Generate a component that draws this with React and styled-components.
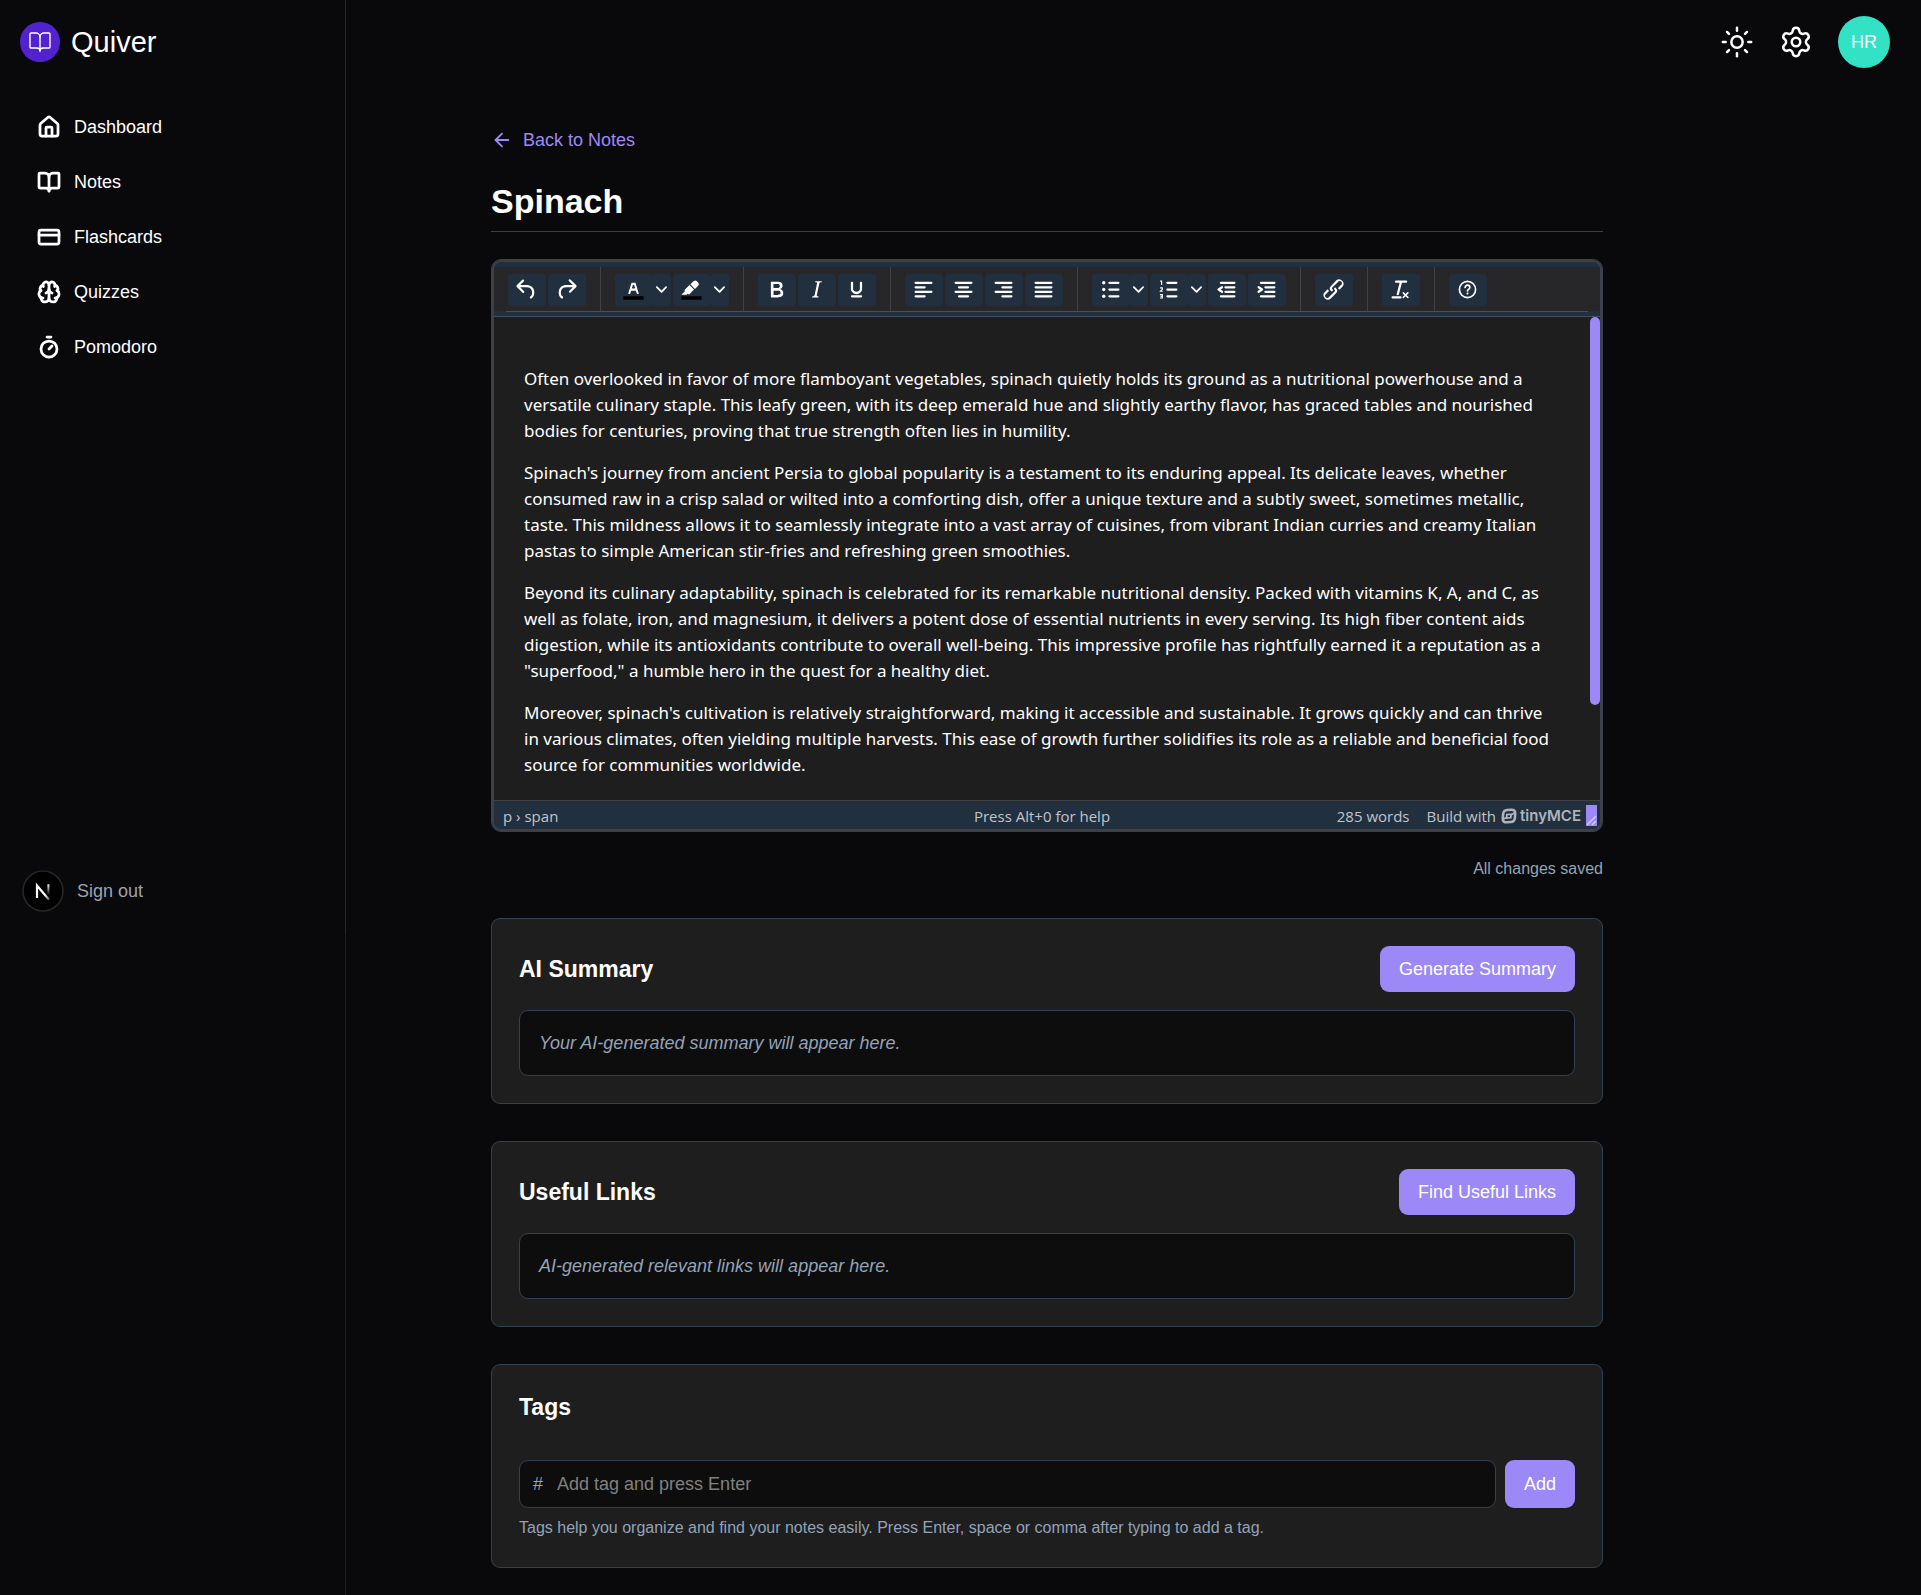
import React from "react";
import styled, { createGlobalStyle, css } from "styled-components";
import { House, BookOpen, CreditCard, Brain, Timer, Sun, Settings, ArrowLeft } from "lucide-react";

const c = {
  page: "#09090b",
  line: "#27272a",
  panel: "#1e1e1e",
  well: "#0d0d0d",
  border: "#334155",
  accent: "#9d88f7",
  blue: "#222f3e",
  muted: "#94a3b8",
  text: "#ffffff",
};

const GlobalStyle = createGlobalStyle`
  *, *::before, *::after { box-sizing: border-box; }
  body {
    margin: 0;
    background: ${c.page};
    color: ${c.text};
    font: 18px/26px "Liberation Sans", Arial, sans-serif;
  }
  h1, h2, p { margin: 0; }
  button, input { font: inherit; color: inherit; }
  button { border: 0; padding: 0; background: none; cursor: pointer; }
  a { color: inherit; text-decoration: none; }
  svg { display: block; flex: none; }
`;

const Shell = styled.div`
  display: flex;
  min-height: 100vh;
`;

const SidebarRail = styled.aside`
  flex: 0 0 346px;
  border-right: 1px solid #1c1c1f;
`;

const Sidebar = styled.div`
  display: flex;
  flex-direction: column;
  min-height: 934px;
  margin-right: -1px;
  padding: 22px 20px;
  border-right: 1px solid ${c.line};
`;

const Brand = styled.a`
  display: flex;
  align-items: center;
  gap: 11px;
  height: 40px;
  font-size: 29px;
`;

const BrandMark = styled.span`
  display: grid;
  place-items: center;
  width: 40px;
  height: 40px;
  border-radius: 50%;
  background: #5222d0;
`;

const Nav = styled.nav`
  display: flex;
  flex-direction: column;
  gap: 9px;
  margin-top: 42px;
`;

const NavLink = styled.a`
  display: flex;
  align-items: center;
  gap: 13px;
  height: 46px;
  padding: 0 17px;
`;

const SidebarFoot = styled.div`
  display: flex;
  align-items: center;
  gap: 13px;
  margin-top: auto;
  padding-left: 2px;
`;

const SignOut = styled.button`
  color: #9ca3af;
`;

const Content = styled.div`
  flex: 1;
  min-width: 0;
`;

const TopBar = styled.header`
  display: flex;
  justify-content: flex-end;
  align-items: center;
  gap: 25px;
  height: 84px;
  padding: 0 31px;
`;

const Avatar = styled.button`
  width: 52px;
  height: 52px;
  border-radius: 50%;
  background: #33e1c5;
`;

const Main = styled.main`
  padding: 43px 173px 27px 0;
`;

const Column = styled.div`
  max-width: 1112px;
  margin: 0 auto;
`;

const BackLink = styled.a`
  display: inline-flex;
  align-items: center;
  gap: 10px;
  color: ${c.accent};
  vertical-align: top;
`;

const Title = styled.h1`
  margin: 28px 0 27px;
  padding-bottom: 10px;
  border-bottom: 1px solid #374151;
  font-size: 34px;
  line-height: 40px;
`;

const Editor = styled.section`
  border: 1px solid #374151;
  border-radius: 10px;
  overflow: hidden;
  background: ${c.blue};
`;

const EditorInner = styled.div`
  border: 2px solid #404044;
  border-radius: 9px;
  overflow: hidden;
`;

const ToolbarArea = styled.div`
  padding: 5px 0 4px;
  border-bottom: 1px solid #435062;
`;

const Toolbar = styled.div`
  display: flex;
  height: 44px;
  background: ${c.line};
`;

const ToolbarRule = styled.div`
  height: 1px;
  margin: 0 12px;
  background: #435062;
`;

const Group = styled.div`
  display: flex;
  align-items: center;
  gap: 2px;
  padding: 1px 14px 0;
  border-right: 1px solid #424246;
  &:last-child { border-right: 0; }
`;

const Tool = styled.button`
  display: grid;
  place-items: center;
  width: ${(p) => (p.$narrow ? 18 : 38)}px;
  height: 32px;
  padding-right: 1px;
  border-radius: 3px;
  background: ${c.blue};
`;

const Split = styled.div`
  display: flex;
  border-radius: 3px;
  overflow: hidden;
`;

const EditArea = styled.div`
  display: flex;
  height: 483px;
  overflow: hidden;
  background: ${c.panel};
`;

const Document = styled.div`
  flex: 1;
  min-width: 0;
  padding: 49px 30px 0;
  font-family: "Noto Sans", "Open Sans", sans-serif;
  font-size: 17px;
  line-height: 26px;
  p + p { margin-top: 16px; }
`;

const ScrollThumb = styled.div`
  width: 10px;
  height: 388px;
  border-radius: 5px;
  background: ${c.accent};
`;

const StatusBar = styled.footer`
  display: grid;
  grid-template-columns: 1fr auto 1fr;
  align-items: center;
  height: 29px;
  padding: 1px 3px 0 9px;
  border-top: 1px solid #404044;
  color: #c0c5ca;
  font-family: "Open Sans", "Noto Sans", sans-serif;
  font-size: 15px;
  line-height: 24px;
`;

const StatusHelp = styled.span`
  margin-right: 16px;
`;

const StatusRight = styled.div`
  display: flex;
  justify-content: flex-end;
  align-items: center;
  gap: 5px;
`;

const WordCount = styled.button`
  margin-right: 12px;
`;

const TinyMark = styled.a`
  display: flex;
  align-items: center;
  gap: 3px;
  color: #aeb4ba;
  font-family: Inter, sans-serif;
  font-size: 15px;
  font-weight: 600;
  line-height: 20px;
`;

const ResizeHandle = styled.div`
  display: flex;
  align-items: flex-end;
  width: 11px;
  height: 21px;
  background: ${c.accent};
`;

const SaveState = styled.p`
  margin: 24px 0 36px;
  color: ${c.muted};
  font-size: 16px;
  text-align: right;
`;

const Cards = styled.div`
  display: grid;
  gap: 37px;
`;

const Card = styled.section`
  padding: 27px;
  border: 1px solid ${c.border};
  border-radius: 9px;
  background: ${c.panel};
`;

const CardHead = styled.div`
  display: flex;
  justify-content: space-between;
  align-items: center;
  margin-bottom: ${(p) => p.$gap || 18}px;
`;

const CardTitle = styled.h2`
  font-size: 23px;
  line-height: 30px;
`;

const Primary = styled.button`
  min-height: 46px;
  padding: 0 19px;
  border-radius: 9px;
  background: ${c.accent};
`;

const well = css`
  border: 1px solid ${c.border};
  border-radius: 9px;
  background: ${c.well};
`;

const Placeholder = styled.p`
  ${well}
  padding: 19px;
  color: ${c.muted};
  font-style: italic;
`;

const TagForm = styled.form`
  display: flex;
  gap: 9px;
`;

const TagField = styled.label`
  ${well}
  display: flex;
  flex: 1;
  align-items: center;
  gap: 14px;
  height: 48px;
  padding: 0 13px;
  color: ${c.muted};
`;

const TagInput = styled.input`
  flex: 1;
  min-width: 0;
  padding: 0;
  border: 0;
  outline: 0;
  background: none;
  color: ${c.text};
  &::placeholder { color: #808080; opacity: 1; }
`;

const Hint = styled.p`
  margin-top: 8px;
  color: ${c.muted};
  font-size: 16px;
  line-height: 24px;
`;

const nav = [
  ["Dashboard", House],
  ["Notes", BookOpen],
  ["Flashcards", CreditCard],
  ["Quizzes", Brain],
  ["Pomodoro", Timer],
];

const paragraphs = [
  "Often overlooked in favor of more flamboyant vegetables, spinach quietly holds its ground as a nutritional powerhouse and a versatile culinary staple. This leafy green, with its deep emerald hue and slightly earthy flavor, has graced tables and nourished bodies for centuries, proving that true strength often lies in humility.",
  "Spinach's journey from ancient Persia to global popularity is a testament to its enduring appeal. Its delicate leaves, whether consumed raw in a crisp salad or wilted into a comforting dish, offer a unique texture and a subtly sweet, sometimes metallic, taste. This mildness allows it to seamlessly integrate into a vast array of cuisines, from vibrant Indian curries and creamy Italian pastas to simple American stir-fries and refreshing green smoothies.",
  "Beyond its culinary adaptability, spinach is celebrated for its remarkable nutritional density. Packed with vitamins K, A, and C, as well as folate, iron, and magnesium, it delivers a potent dose of essential nutrients in every serving. Its high fiber content aids digestion, while its antioxidants contribute to overall well-being. This impressive profile has rightfully earned it a reputation as a \"superfood,\" a humble hero in the quest for a healthy diet.",
  "Moreover, spinach's cultivation is relatively straightforward, making it accessible and sustainable. It grows quickly and can thrive in various climates, often yielding multiple harvests. This ease of growth further solidifies its role as a reliable and beneficial food source for communities worldwide.",
];

const Bars = ({ rows }) =>
  rows.map(([x, y, w]) => <rect key={`${x}-${y}`} x={x} y={y} width={w} height="2" rx="1" />);

const icons = {
  undo: <path d="M6.4 8H12c3.7 0 6.2 2 6.8 5.1.6 2.7-.4 5.6-2.3 6.8a1 1 0 0 1-1-1.8c1.1-.6 1.8-2.7 1.4-4.6-.5-2.1-2.1-3.5-4.9-3.5H6.4l3.3 3.3a1 1 0 1 1-1.4 1.4l-5-5a1 1 0 0 1 0-1.4l5-5a1 1 0 0 1 1.4 1.4L6.4 8Z" />,
  redo: <path d="M17.6 10H12c-2.8 0-4.4 1.4-4.9 3.5-.4 2 .3 4 1.4 4.6a1 1 0 1 1-1 1.8c-2-1.2-2.9-4.1-2.3-6.8.6-3 3-5.1 6.8-5.1h5.6l-3.3-3.3a1 1 0 1 1 1.4-1.4l5 5a1 1 0 0 1 0 1.4l-5 5a1 1 0 0 1-1.4-1.4l3.3-3.3Z" />,
  color: (
    <>
      <path fill="#000" d="M3 18h18v3H3z" />
      <path d="M8.7 16h-.8a.5.5 0 0 1-.5-.6l2.7-9c.1-.3.3-.4.5-.4h2.8c.2 0 .4.1.5.4l2.7 9a.5.5 0 0 1-.5.6h-.8a.5.5 0 0 1-.4-.4l-.7-2.2c0-.3-.3-.4-.5-.4h-3.4c-.2 0-.4.1-.5.4l-.7 2.2c0 .3-.2.4-.4.4Zm2.6-7.6-.6 2a.5.5 0 0 0 .5.6h1.6a.5.5 0 0 0 .5-.6l-.6-2c0-.3-.3-.4-.5-.4h-.4c-.2 0-.4.1-.5.4Z" />
    </>
  ),
  highlight: (
    <>
      <path fill="#000" d="M3 18h18v3H3z" />
      <path d="M7.7 16.7H3l3.3-3.3-.7-.8L10.2 8l4 4.1-4 4.2c-.2.2-.6.2-.8 0l-.6-.7-1.1 1.1zm5-7.5L11 7.4l3-2.9a2 2 0 0 1 2.6 0L18 6c.7.7.7 2 0 2.7l-2.9 2.9-1.8-1.8-.5-.6" />
    </>
  ),
  bold: <path d="M7.8 19c-.3 0-.5 0-.6-.2l-.2-.5V5.7c0-.2 0-.4.2-.5l.6-.2h5c1.5 0 2.7.3 3.5 1 .7.6 1.1 1.4 1.1 2.5a3 3 0 0 1-.6 1.9c-.4.6-1 1-1.6 1.2.4.1.9.3 1.3.6s.8.7 1 1.2c.4.4.5 1 .5 1.6 0 1.3-.4 2.3-1.3 3-.8.7-2.1 1-3.8 1H7.8Zm5-8.3c.6 0 1.2-.1 1.6-.5.4-.3.6-.7.6-1.3 0-1.1-.8-1.7-2.3-1.7H9.3v3.5h3.4Zm.5 6c.7 0 1.3-.1 1.7-.4.4-.4.6-.9.6-1.5s-.2-1-.7-1.4c-.4-.3-1-.4-2-.4H9.4v3.8h4Z" />,
  italic: <path d="m16.7 4.7-.1.9h-.3c-.6 0-1 0-1.4.3-.3.3-.4.6-.5 1.1l-2.1 9.8v.6c0 .5.4.8 1.4.8h.2l-.2.8H8l.2-.8h.2c1.1 0 1.8-.5 2-1.5l2-9.8.1-.5c0-.6-.4-.8-1.4-.8h-.3l.2-.9h5.8Z" />,
  underline: <path d="M16 5c.6 0 1 .4 1 1v5.5a4 4 0 0 1-.4 1.8l-1 1.4a5.3 5.3 0 0 1-5.5 1 5 5 0 0 1-1.6-1c-.5-.4-.8-.9-1.1-1.4a4 4 0 0 1-.4-1.8V6c0-.6.4-1 1-1s1 .4 1 1v5.5c0 .3 0 .6.2 1l.6.7a3.3 3.3 0 0 0 2.2.8 3.4 3.4 0 0 0 2.2-.8c.3-.2.4-.5.6-.8l.2-.9V6c0-.6.4-1 1-1ZM8 17h8c.6 0 1 .4 1 1s-.4 1-1 1H8a1 1 0 0 1 0-2Z" />,
  left: <Bars rows={[[4, 5, 16], [4, 9, 10], [4, 13, 16], [4, 17, 10]]} />,
  center: <Bars rows={[[4, 5, 16], [7, 9, 10], [4, 13, 16], [7, 17, 10]]} />,
  right: <Bars rows={[[4, 5, 16], [10, 9, 10], [4, 13, 16], [10, 17, 10]]} />,
  justify: <Bars rows={[[4, 5, 16], [4, 9, 16], [4, 13, 16], [4, 17, 16]]} />,
  bullets: (
    <>
      <Bars rows={[[10, 5, 10], [10, 11, 10], [10, 17, 10]]} />
      <circle cx="6" cy="6" r="1.5" />
      <circle cx="6" cy="12" r="1.5" />
      <circle cx="6" cy="18" r="1.5" />
    </>
  ),
  numbers: (
    <>
      <Bars rows={[[10, 5, 10], [10, 11, 10], [10, 17, 10]]} />
      <path fill="none" stroke="currentColor" strokeWidth="1" d="M4.6 4.5h1.3V8M4.4 10.5h2.1v1.4L4.9 13.5h2M4.4 16.5h2.1v3H4.4M4.8 18h1.7" />
    </>
  ),
  outdent: (
    <>
      <Bars rows={[[6, 5, 14], [10, 9, 10], [10, 13, 10], [6, 17, 14]]} />
      <path d="M8.6 13.2a1 1 0 0 1-1.2 1.6l-3-2a1 1 0 0 1 0-1.6l3-2a1 1 0 0 1 1.2 1.6L6.8 12l1.8 1.2Z" />
    </>
  ),
  indent: (
    <>
      <Bars rows={[[6, 5, 14], [10, 9, 10], [10, 13, 10], [6, 17, 14]]} />
      <path d="M4.4 13.2 6.2 12l-1.8-1.2a1 1 0 0 1 1.2-1.6l3 2a1 1 0 0 1 0 1.6l-3 2a1 1 0 1 1-1.2-1.6Z" />
    </>
  ),
  link: <path d="M6.2 12.3a1 1 0 0 1 1.4 1.4l-2 2a2 2 0 1 0 2.6 2.8l4.8-4.8a1 1 0 0 0 0-1.4 1 1 0 1 1 1.4-1.3 2.9 2.9 0 0 1 0 4L9.6 20a3.9 3.9 0 0 1-5.5-5.5l2-2Zm11.6-.6a1 1 0 0 1-1.4-1.4l2-2a2 2 0 1 0-2.6-2.8L11 10.3a1 1 0 0 0 0 1.4A1 1 0 1 1 9.6 13a2.9 2.9 0 0 1 0-4L14.4 4a3.9 3.9 0 0 1 5.5 5.5l-2 2Z" />,
  clear: <path d="M13.2 6a1 1 0 0 1 0 .2l-2.6 10a1 1 0 0 1-1 .8h-.2a.8.8 0 0 1-.8-1l2.6-10H8a1 1 0 1 1 0-2h9a1 1 0 0 1 0 2h-3.8ZM5 18h7a1 1 0 0 1 0 2H5a1 1 0 0 1 0-2Zm13 1.5L16.5 18 15 19.5a.7.7 0 0 1-1-1l1.5-1.5-1.5-1.5a.7.7 0 0 1 1-1l1.5 1.5 1.5-1.5a.7.7 0 0 1 1 1L17.5 17l1.5 1.5a.7.7 0 0 1-1 1Z" />,
  help: (
    <>
      <circle cx="12" cy="12" r="7.2" fill="none" stroke="currentColor" strokeWidth="1.5" />
      <path fill="none" stroke="currentColor" strokeWidth="1.5" strokeLinecap="round" d="M9.9 10.2a2.1 2.1 0 0 1 4.2.1c0 1.4-2.1 1.5-2.1 3" />
      <circle cx="12" cy="15.6" r="0.9" />
    </>
  ),
};

const groups = [
  [["undo", "Undo"], ["redo", "Redo"]],
  [["color", "Text color", true], ["highlight", "Background color", true]],
  [["bold", "Bold"], ["italic", "Italic"], ["underline", "Underline"]],
  [["left", "Align left"], ["center", "Align center"], ["right", "Align right"], ["justify", "Justify"]],
  [["bullets", "Bullet list", true], ["numbers", "Numbered list", true], ["outdent", "Decrease indent"], ["indent", "Increase indent"]],
  [["link", "Insert link"]],
  [["clear", "Clear formatting"]],
  [["help", "Help"]],
];

const ToolButton = ({ icon, label }) => (
  <Tool type="button" aria-label={label}>
    <svg width="27" height="27" viewBox="0 0 24 24" fill="currentColor">{icons[icon]}</svg>
  </Tool>
);

const SplitButton = ({ icon, label }) => (
  <Split>
    <ToolButton icon={icon} label={label} />
    <Tool type="button" $narrow aria-label={`${label} menu`}>
      <svg width="11" height="11" viewBox="0 0 10 10" fill="currentColor">
        <path d="M8.7 2.2c.3-.3.8-.3 1 0 .4.4.4.9 0 1.2L5.7 7.8c-.3.3-.9.3-1.2 0L.2 3.4a.8.8 0 0 1 0-1.2c.3-.3.8-.3 1.1 0L5 6l3.7-3.8Z" />
      </svg>
    </Tool>
  </Split>
);

const DevBadge = () => (
  <svg width="42" height="42" viewBox="0 0 42 42" aria-hidden="true">
    <defs>
      <linearGradient id="diag" x1="24" y1="24" x2="28" y2="30" gradientUnits="userSpaceOnUse">
        <stop stopColor="#fff" />
        <stop offset="1" stopColor="#fff" stopOpacity="0.3" />
      </linearGradient>
      <linearGradient id="stem" x1="26" y1="14" x2="26" y2="25" gradientUnits="userSpaceOnUse">
        <stop stopColor="#fff" />
        <stop offset="1" stopColor="#fff" stopOpacity="0" />
      </linearGradient>
    </defs>
    <circle cx="21" cy="21" r="20" fill="#000" stroke="#262626" strokeWidth="1.6" />
    <path d="M15 28V15.5l12 14.3" fill="none" stroke="url(#diag)" strokeWidth="2.2" />
    <path d="M26.4 14.3V25" stroke="url(#stem)" strokeWidth="2" />
  </svg>
);

export default function App() {
  return (
    <>
      <GlobalStyle />
      <Shell>
        <SidebarRail>
          <Sidebar>
            <Brand href="#">
              <BrandMark><BookOpen size={24} strokeWidth={1.4} /></BrandMark>
              Quiver
            </Brand>
            <Nav>
              {nav.map(([label, Icon]) => (
                <NavLink href="#" key={label}>
                  <Icon size={24} strokeWidth={2.75} />
                  {label}
                </NavLink>
              ))}
            </Nav>
            <SidebarFoot>
              <DevBadge />
              <SignOut type="button">Sign out</SignOut>
            </SidebarFoot>
          </Sidebar>
        </SidebarRail>

        <Content>
          <TopBar>
            <button type="button" aria-label="Toggle theme"><Sun size={34} strokeWidth={1.75} /></button>
            <button type="button" aria-label="Settings"><Settings size={34} strokeWidth={1.75} /></button>
            <Avatar type="button">HR</Avatar>
          </TopBar>
          <Main>
            <Column>
              <BackLink href="#"><ArrowLeft size={22} />Back to Notes</BackLink>
              <Title>Spinach</Title>

              <Editor>
                <EditorInner>
                  <ToolbarArea>
                    <Toolbar role="toolbar">
                      {groups.map((tools) => (
                        <Group key={tools[0][0]}>
                          {tools.map(([icon, label, split]) =>
                            split
                              ? <SplitButton key={icon} icon={icon} label={label} />
                              : <ToolButton key={icon} icon={icon} label={label} />
                          )}
                        </Group>
                      ))}
                    </Toolbar>
                    <ToolbarRule />
                  </ToolbarArea>
                  <EditArea>
                    <Document>
                      {paragraphs.map((text) => <p key={text}>{text}</p>)}
                    </Document>
                    <ScrollThumb />
                  </EditArea>
                  <StatusBar>
                    <span>p › span</span>
                    <StatusHelp>Press Alt+0 for help</StatusHelp>
                    <StatusRight>
                      <WordCount type="button">285 words</WordCount>
                      <span>Build with</span>
                      <TinyMark href="#">
                        <svg width="16" height="16" viewBox="0 0 16 16" fill="none" stroke="currentColor">
                          <path strokeWidth="2.6" d="M6.2 2 10 1.7Q14.4 1.5 14.2 5.5L13.9 9.8Q13.5 13.7 9.8 14L6 14.3Q1.6 14.5 1.8 10.5L2.1 6.2Q2.5 2.3 6.2 2Z" />
                          <path strokeWidth="1.8" d="M5.8 6.6 10.2 6.2 9.8 9.6 5.6 10ZM2.5 11l3-1.5M10.5 6.5l3-1.5" />
                        </svg>
                        tinyMCE
                      </TinyMark>
                      <ResizeHandle>
                        <svg width="11" height="11" viewBox="0 0 11 11" stroke="#d6d0f5" strokeWidth="1.3">
                          <path d="M1 10 10 1M6 10l4-4" />
                        </svg>
                      </ResizeHandle>
                    </StatusRight>
                  </StatusBar>
                </EditorInner>
              </Editor>

              <SaveState>All changes saved</SaveState>

              <Cards>
                <Card>
                  <CardHead>
                    <CardTitle>AI Summary</CardTitle>
                    <Primary type="button">Generate Summary</Primary>
                  </CardHead>
                  <Placeholder>Your AI-generated summary will appear here.</Placeholder>
                </Card>
                <Card>
                  <CardHead>
                    <CardTitle>Useful Links</CardTitle>
                    <Primary type="button">Find Useful Links</Primary>
                  </CardHead>
                  <Placeholder>AI-generated relevant links will appear here.</Placeholder>
                </Card>
                <Card>
                  <CardHead $gap={38}>
                    <CardTitle>Tags</CardTitle>
                  </CardHead>
                  <TagForm onSubmit={(e) => e.preventDefault()}>
                    <TagField>
                      #
                      <TagInput type="text" placeholder="Add tag and press Enter" />
                    </TagField>
                    <Primary type="submit">Add</Primary>
                  </TagForm>
                  <Hint>Tags help you organize and find your notes easily. Press Enter, space or comma after typing to add a tag.</Hint>
                </Card>
              </Cards>
            </Column>
          </Main>
        </Content>
      </Shell>
    </>
  );
}
